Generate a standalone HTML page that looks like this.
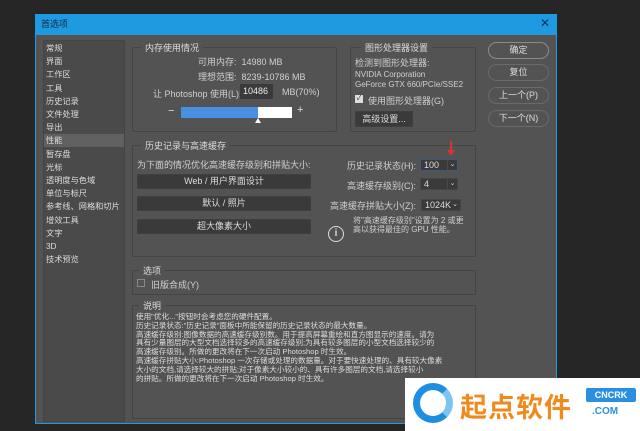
<!DOCTYPE html>
<html><head><meta charset="utf-8"><style>
*{margin:0;padding:0;box-sizing:border-box}
body{width:640px;height:431px;background:#262626;position:relative;overflow:hidden;font-family:"Liberation Sans","Noto Sans CJK SC",sans-serif;font-size:9px;color:#d0d0d0}
.a{position:absolute;white-space:nowrap}
.grp{position:absolute;border:1px solid #444;border-radius:2px}
.gt{position:absolute;background:#535353;padding:0 4px;top:-7px;left:8px;color:#ddd}
.btn{position:absolute;background:#3a3a3a;border:1px solid #3f3f3f;text-align:center;color:#ddd;line-height:13px}
.rb{position:absolute;left:488px;width:61px;height:17px;border:1px solid #8a8a8a;border-radius:9px;text-align:center;line-height:15px;color:#ddd}
.sel{position:absolute;background:#3a3a3a;border:1px solid #454545;height:12px;line-height:10px;padding-left:3px;color:#ddd}
.sel i{position:absolute;right:0;top:0;width:10px;height:10px;border-left:1px solid #4a4a4a;font-style:normal;font-size:7px;text-align:center}
</style></head><body>
<div class="a" style="left:35px;top:14px;width:522px;height:410px;background:#535353;border:1px solid #1e9be0"></div>
<div class="a" style="left:35px;top:14px;width:522px;height:21px;background:#1e9be0;color:#1a2a40;font-size:9px;line-height:20px;padding-left:6px">首选项</div>
<div class="a" style="left:540px;top:16px;color:#0d2f55;font-size:12px">✕</div>
<div class="a" style="left:43px;top:40px;width:82px;height:382px;background:#4a4a4a;border:1px solid #444"></div>
<div class="a" style="left:44px;top:134px;width:80px;height:13px;background:#606060"></div>
<div class="a" style="left:46px;top:42px;line-height:13.2px;color:#ddd;font-size:8.2px">常规<br>界面<br>工作区<br>工具<br>历史记录<br>文件处理<br>导出<br>性能<br>暂存盘<br>光标<br>透明度与色域<br>单位与标尺<br>参考线、网格和切片<br>增效工具<br>文字<br>3D<br>技术预览</div>

<div class="grp" style="left:132px;top:47px;width:205px;height:85px"><span class="gt">内存使用情况</span></div>
<div class="a" style="left:198px;top:55px">可用内存:&nbsp; 14980 MB</div>
<div class="a" style="left:198px;top:70px">理想范围:&nbsp; 8239-10786 MB</div>
<div class="a" style="left:153px;top:87px">让 Photoshop 使用(L):</div>
<div class="a" style="left:240px;top:84px;width:33px;height:15px;background:#3a3a3a;line-height:15px;padding-left:3px;color:#eee">10486</div>
<div class="a" style="left:282px;top:87px">MB(70%)</div>
<div class="a" style="left:168px;top:105px;font-size:11px;color:#ddd">−</div>
<div class="a" style="left:181px;top:107px;width:111px;height:11px;background:#fff"></div>
<div class="a" style="left:181px;top:107px;width:77px;height:11px;background:#4a90e2"></div>
<div class="a" style="left:297px;top:104px;font-size:11px;color:#ddd">+</div>
<div class="a" style="left:255px;top:118px;width:0;height:0;border-left:3px solid transparent;border-right:3px solid transparent;border-bottom:5px solid #fff"></div>

<div class="grp" style="left:350px;top:47px;width:126px;height:85px"><span class="gt" style="left:10px">图形处理器设置</span></div>
<div class="a" style="left:355px;top:56px">检测到图形处理器:</div>
<div class="a" style="left:355px;top:70px;font-size:8px;line-height:10px">NVIDIA Corporation<br>GeForce GTX 660/PCIe/SSE2</div>
<div class="a" style="left:355px;top:95px;width:8px;height:8px;background:#ddd;color:#333;font-size:7px;line-height:8px;text-align:center">✓</div>
<div class="a" style="left:368px;top:94px">使用图形处理器(G)</div>
<div class="btn" style="left:355px;top:111px;width:58px;height:16px;line-height:14px">高级设置...</div>

<div class="rb" style="top:42px">确定</div>
<div class="rb" style="top:64px;border-color:#6a6a6a">复位</div>
<div class="rb" style="top:87px;border-color:#6a6a6a">上一个(P)</div>
<div class="rb" style="top:110px;border-color:#6a6a6a">下一个(N)</div>

<div class="grp" style="left:132px;top:145px;width:344px;height:112px"><span class="gt">历史记录与高速缓存</span></div>
<div class="a" style="left:137px;top:158px">为下面的情况优化高速缓存级别和拼贴大小:</div>
<div class="btn" style="left:137px;top:174px;width:174px;height:15px">Web / 用户界面设计</div>
<div class="btn" style="left:137px;top:196px;width:174px;height:15px">默认 / 照片</div>
<div class="btn" style="left:137px;top:219px;width:174px;height:15px">超大像素大小</div>
<div class="a" style="left:347px;top:159px">历史记录状态(H):</div>
<div class="a" style="left:347px;top:179px">高速缓存级别(C):</div>
<div class="a" style="left:330px;top:199px">高速缓存拼贴大小(Z):</div>
<div class="sel" style="left:420px;top:159px;width:38px;border-color:#3a5a80">100<i>⌄</i></div>
<div class="sel" style="left:420px;top:178px;width:38px">4<i>⌄</i></div>
<div class="sel" style="left:421px;top:199px;width:40px">1024K<i style="border:0">⌄</i></div>
<div class="a" style="left:450px;top:141px;width:2px;height:12px;background:#e03030"></div>
<div class="a" style="left:447px;top:150px;border-left:4px solid transparent;border-right:4px solid transparent;border-top:6px solid #e03030"></div>
<div class="a" style="left:328px;top:226px;width:16px;height:16px;border:1.5px solid #ddd;border-radius:50%;text-align:center;font-size:10px;line-height:13px;font-weight:bold;color:#ddd">i</div>
<div class="a" style="left:353px;top:216px;font-size:8px;line-height:9px">将"高速缓存级别"设置为 2 或更<br>高以获得最佳的 GPU 性能。</div>

<div class="grp" style="left:132px;top:270px;width:344px;height:25px"><span class="gt" style="left:6px">选项</span></div>
<div class="a" style="left:137px;top:279px;width:8px;height:8px;border:1px solid #888"></div>
<div class="a" style="left:151px;top:278px">旧版合成(Y)</div>

<div class="grp" style="left:132px;top:305px;width:344px;height:114px"><span class="gt" style="left:6px">说明</span></div>
<div class="a" style="left:136px;top:313px;font-size:7.6px;line-height:8.8px;color:#ddd">使用"优化..."按钮时会考虑您的硬件配置。<br>历史记录状态:"历史记录"面板中所能保留的历史记录状态的最大数量。<br>高速缓存级别:图像数据的高速缓存级别数。用于提高屏幕重绘和直方图显示的速度。请为<br>具有少量图层的大型文档选择较多的高速缓存级别;为具有较多图层的小型文档选择较少的<br>高速缓存级别。所做的更改将在下一次启动 Photoshop 时生效。<br>高速缓存拼贴大小:Photoshop 一次存储或处理的数据量。对于要快速处理的、具有较大像素<br>大小的文档,请选择较大的拼贴;对于像素大小较小的、具有许多图层的文档,请选择较小<br>的拼贴。所做的更改将在下一次启动 Photoshop 时生效。</div>

<div class="a" style="left:405px;top:378px;width:235px;height:53px;background:#fff"></div>
<div class="a" style="left:413px;top:383px;width:40px;height:40px;border-radius:50%;border:7px solid #1e8fe0;border-right-color:#7cc4f2"></div>
<div class="a" style="left:460px;top:386px;font-size:27px;font-weight:bold;color:#f08a1c;letter-spacing:1px">起点软件</div>
<div class="a" style="left:586px;top:388px;width:50px;height:14px;background:#2a8fe0;color:#fff;font-size:9px;font-weight:bold;text-align:center;line-height:14px;border-radius:2px">CNCRK</div>
<div class="a" style="left:592px;top:406px;color:#2a8fe0;font-size:10px;font-weight:bold">.COM</div>
</body></html>
